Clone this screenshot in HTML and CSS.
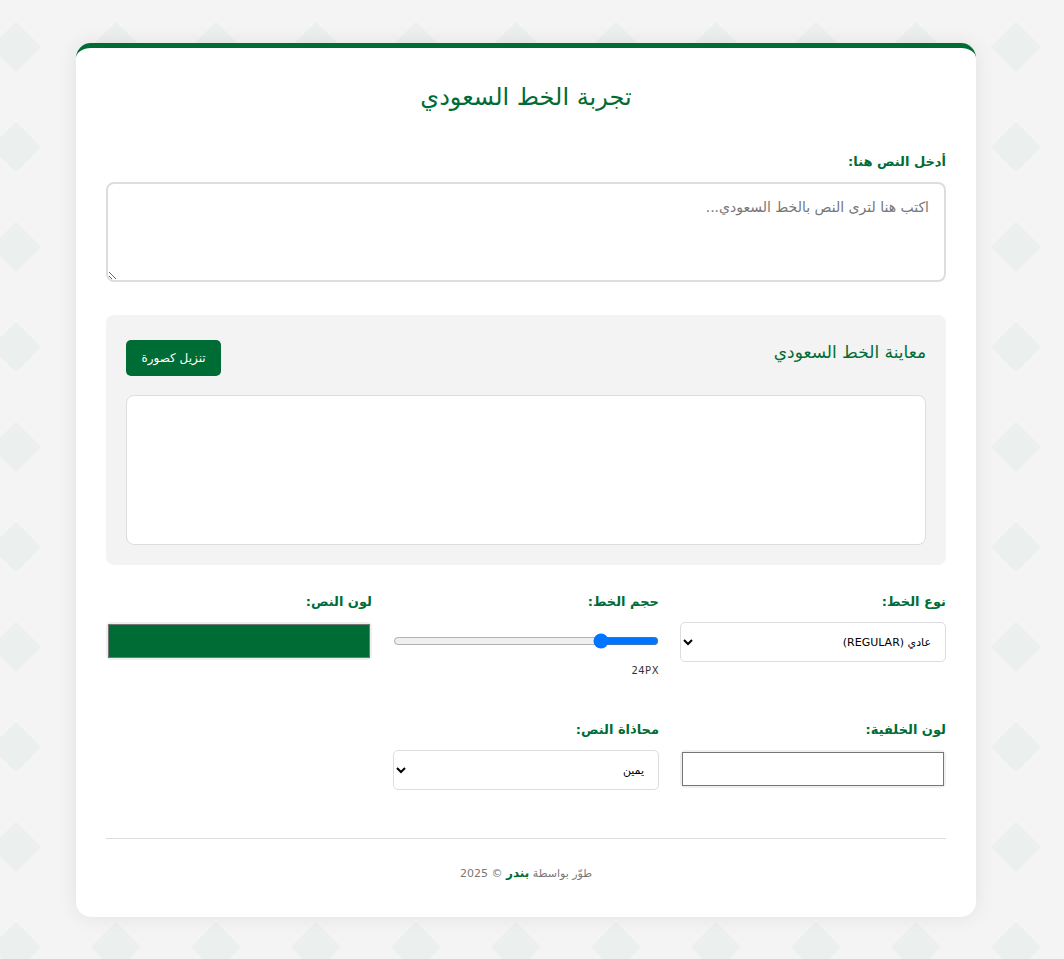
FILE: index.html
```html
<!DOCTYPE html>
<html lang="ar" dir="rtl">
<head>
<meta charset="utf-8">
<title>تجربة الخط السعودي</title>
<link rel="stylesheet" href="styles.css">
</head>
<body>
<div class="card">
  <h1 class="title">تجربة الخط السعودي</h1>

  <div class="group">
    <label class="label" for="txt">أدخل النص هنا:</label>
    <textarea id="txt" class="textarea" placeholder="اكتب هنا لترى النص بالخط السعودي..."></textarea>
  </div>

  <div class="preview">
    <div class="preview-head">
      <h2 class="preview-title">معاينة الخط السعودي</h2>
      <button class="btn">تنزيل كصورة</button>
    </div>
    <div class="preview-box"></div>
  </div>

  <div class="controls">
    <div class="control">
      <label class="label">نوع الخط:</label>
      <select class="select">
        <option>عادي (REGULAR)</option>
      </select>
    </div>
    <div class="control">
      <label class="label">حجم الخط:</label>
      <input class="range" type="range" min="12" max="72" value="24">
      <div class="range-value">24PX</div>
    </div>
    <div class="control">
      <label class="label">لون النص:</label>
      <input class="color" type="color" value="#006c35">
    </div>
    <div class="control">
      <label class="label">لون الخلفية:</label>
      <input class="color" type="color" value="#ffffff">
    </div>
    <div class="control">
      <label class="label">محاذاة النص:</label>
      <select class="select">
        <option>يمين</option>
      </select>
    </div>
  </div>

  <footer class="footer">
    طوّر بواسطة <strong class="author">بندر</strong> © 2025
  </footer>
</div>
</body>
</html>
```
FILE: styles.css
```css
* { box-sizing: border-box; }

html, body { height: 100%; }

body {
  margin: 0;
  padding: 43px 12px 43px 0;
  font-family: "DejaVu Sans", "Noto Sans", sans-serif;
  background-color: #f4f4f4;
  background-image: url("data:image/svg+xml,%3Csvg xmlns='http://www.w3.org/2000/svg' width='100' height='100'%3E%3Cpolygon points='50,25 75,50 50,75 25,50' fill='%23006c35' fill-opacity='0.035'/%3E%3C/svg%3E");
  background-position: -34px -3px;
  color: #333;
}

.card {
  width: 900px;
  margin: 0 auto;
  background: #fff;
  border-top: 5px solid #006c35;
  border-radius: 15px;
  box-shadow: 0 0 20px rgba(0, 0, 0, 0.08);
  padding: 30px 30px 34px;
}

.title {
  margin: 0 0 34px;
  text-align: center;
  color: #006c35;
  font-size: 24px;
  font-weight: normal;
  line-height: 39px;
}

.group { margin-bottom: 33px; }

.label {
  display: block;
  color: #006c35;
  font-size: 13px;
  font-weight: bold;
  line-height: 21px;
  margin-bottom: 10px;
}

.textarea {
  display: block;
  width: 100%;
  height: 100px;
  border: 2px solid #ddd;
  border-radius: 8px;
  padding: 15px;
  font-family: inherit;
  font-size: 14px;
  resize: vertical;
  background: #fff;
}
.textarea::placeholder { color: #777; }

.preview {
  background: #f3f3f3;
  border-radius: 8px;
  padding: 20px;
  margin-bottom: 26px;
}

.preview-head {
  display: flex;
  justify-content: space-between;
  align-items: flex-start;
  height: 45px;
  padding-top: 5px;
  margin-bottom: 15px;
}

.preview-title {
  margin: 0;
  color: #006c35;
  font-size: 17px;
  line-height: 24px;
  font-weight: normal;
}

.btn {
  background: #006c35;
  color: #fff;
  border: none;
  border-radius: 5px;
  width: 95px;
  height: 36px;
  font-family: inherit;
  font-size: 12px;
  cursor: pointer;
}

.preview-box {
  background: #fff;
  border: 1px solid #ddd;
  border-radius: 8px;
  height: 150px;
}

.controls {
  display: grid;
  grid-template-columns: repeat(3, 1fr);
  column-gap: 21px;
  row-gap: 40px;
}

.select {
  display: block;
  width: 100%;
  height: 40px;
  border: 1px solid #ddd;
  border-radius: 5px;
  background: #fff;
  padding: 0 10px;
  font-family: inherit;
  font-size: 11px;
  color: #000;
}

.range {
  display: block;
  width: 100%;
  margin: 19px 0 0;
  height: 20px;
}

.range-value {
  font-size: 10px;
  letter-spacing: 0.5px;
  line-height: 16px;
  margin-top: 12px;
  color: #333;
}

.color {
  -webkit-appearance: none;
  appearance: none;
  display: block;
  width: 100%;
  height: 38px;
  margin-top: 3px;
  padding: 0;
  border: none;
  border-radius: 5px;
  background: #efefef;
  cursor: pointer;
}
.color::-webkit-color-swatch-wrapper { padding: 2px; }
.color::-webkit-color-swatch { border: 1px solid #767676; border-radius: 0; }

.footer {
  margin-top: 48px;
  border-top: 1px solid #ddd;
  padding-top: 25px;
  text-align: center;
  font-size: 11px;
  line-height: 18px;
  color: #777;
}

.author { color: #006c35; font-weight: bold; font-size: 12px; }
```
